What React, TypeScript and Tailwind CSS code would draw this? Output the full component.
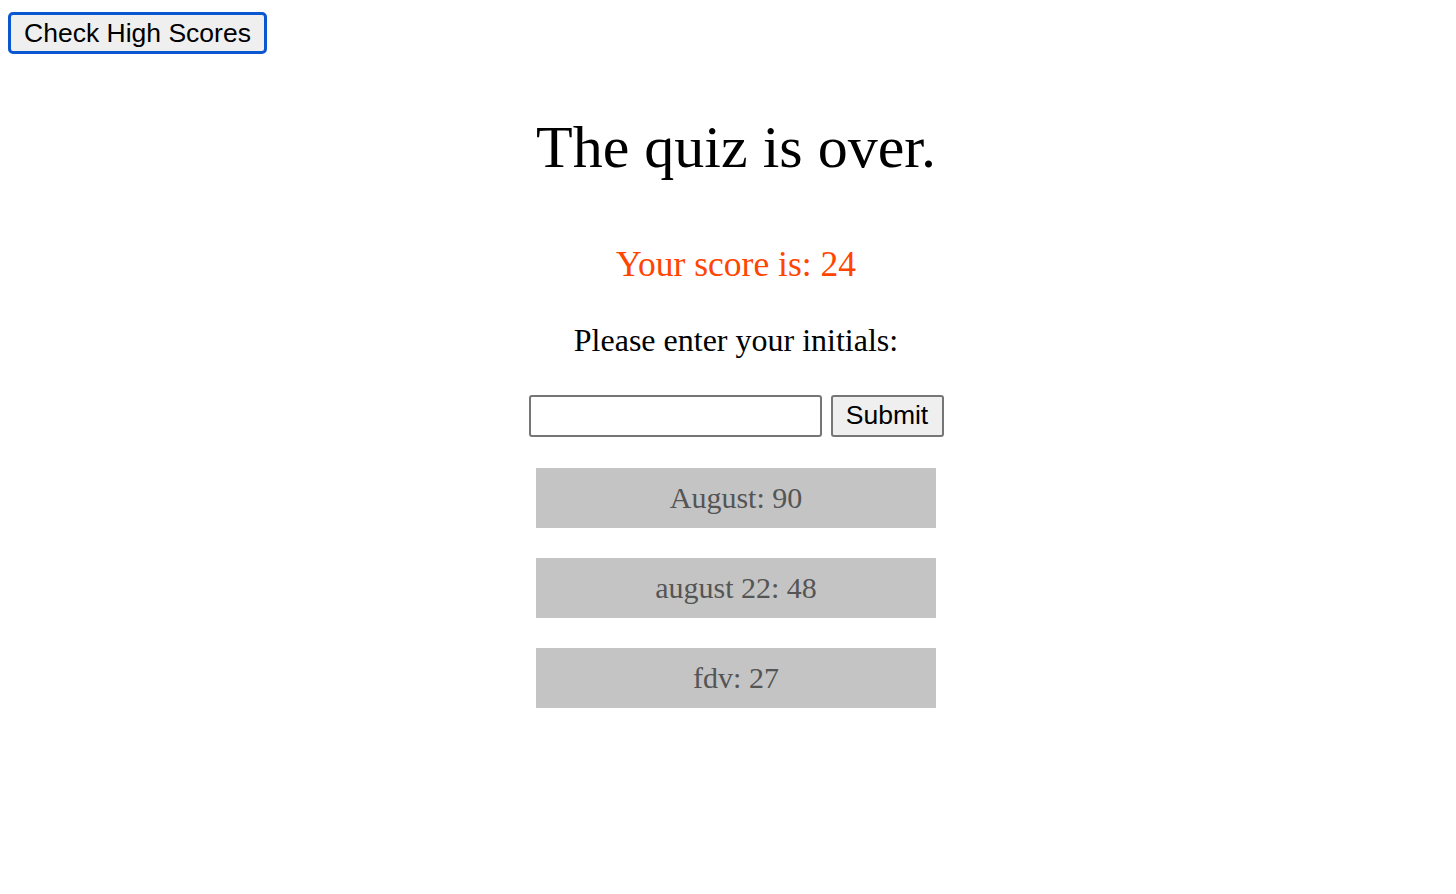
import type { FC } from 'react'

const scores = [
  { name: 'August', score: 90 },
  { name: 'august 22', score: 48 },
  { name: 'fdv', score: 27 },
]

const App: FC = () => {
  return (
    <div className="min-h-screen bg-white font-['Liberation_Serif','Times_New_Roman',serif] text-black">
      <div className="pl-[8px] pt-[12px]">
        <button className="h-[42px] w-[259px] rounded-[5px] border-[3px] border-[#0b57d0] bg-[#efefef] text-[26.5px] leading-none text-black font-['Liberation_Sans',Arial,sans-serif]">
          Check High Scores
        </button>
      </div>

      <div className="flex flex-col items-center pl-[16px]">
        <h1 className="mt-[63px] text-[60px] leading-none font-normal">The quiz is over.</h1>

        <p className="mt-[70px] text-[35.5px] leading-none text-[#ff4500]">Your score is: 24</p>

        <p className="mt-[41px] text-[32px] leading-none">Please enter your initials:</p>

        <div className="mt-[39px] flex items-center gap-[9px]">
          <input
            type="text"
            className="h-[42px] w-[293px] rounded-[3px] border-2 border-[#767676] bg-white px-2 text-[26px] outline-none"
          />
          <button className="h-[42px] w-[113px] rounded-[3px] border-2 border-[#767676] bg-[#efefef] text-[26.5px] leading-none font-['Liberation_Sans',Arial,sans-serif]">
            Submit
          </button>
        </div>

        {/* high score list */}
        <ul className="mt-[31px] flex flex-col gap-[30px]">
          {scores.map((s) => (
            <li
              key={s.name}
              className="flex h-[60px] w-[400px] items-center justify-center bg-[#c4c4c4] text-[30px] leading-none text-[#555555]"
            >
              {s.name}: {s.score}
            </li>
          ))}
        </ul>
      </div>
    </div>
  )
}

export default App
